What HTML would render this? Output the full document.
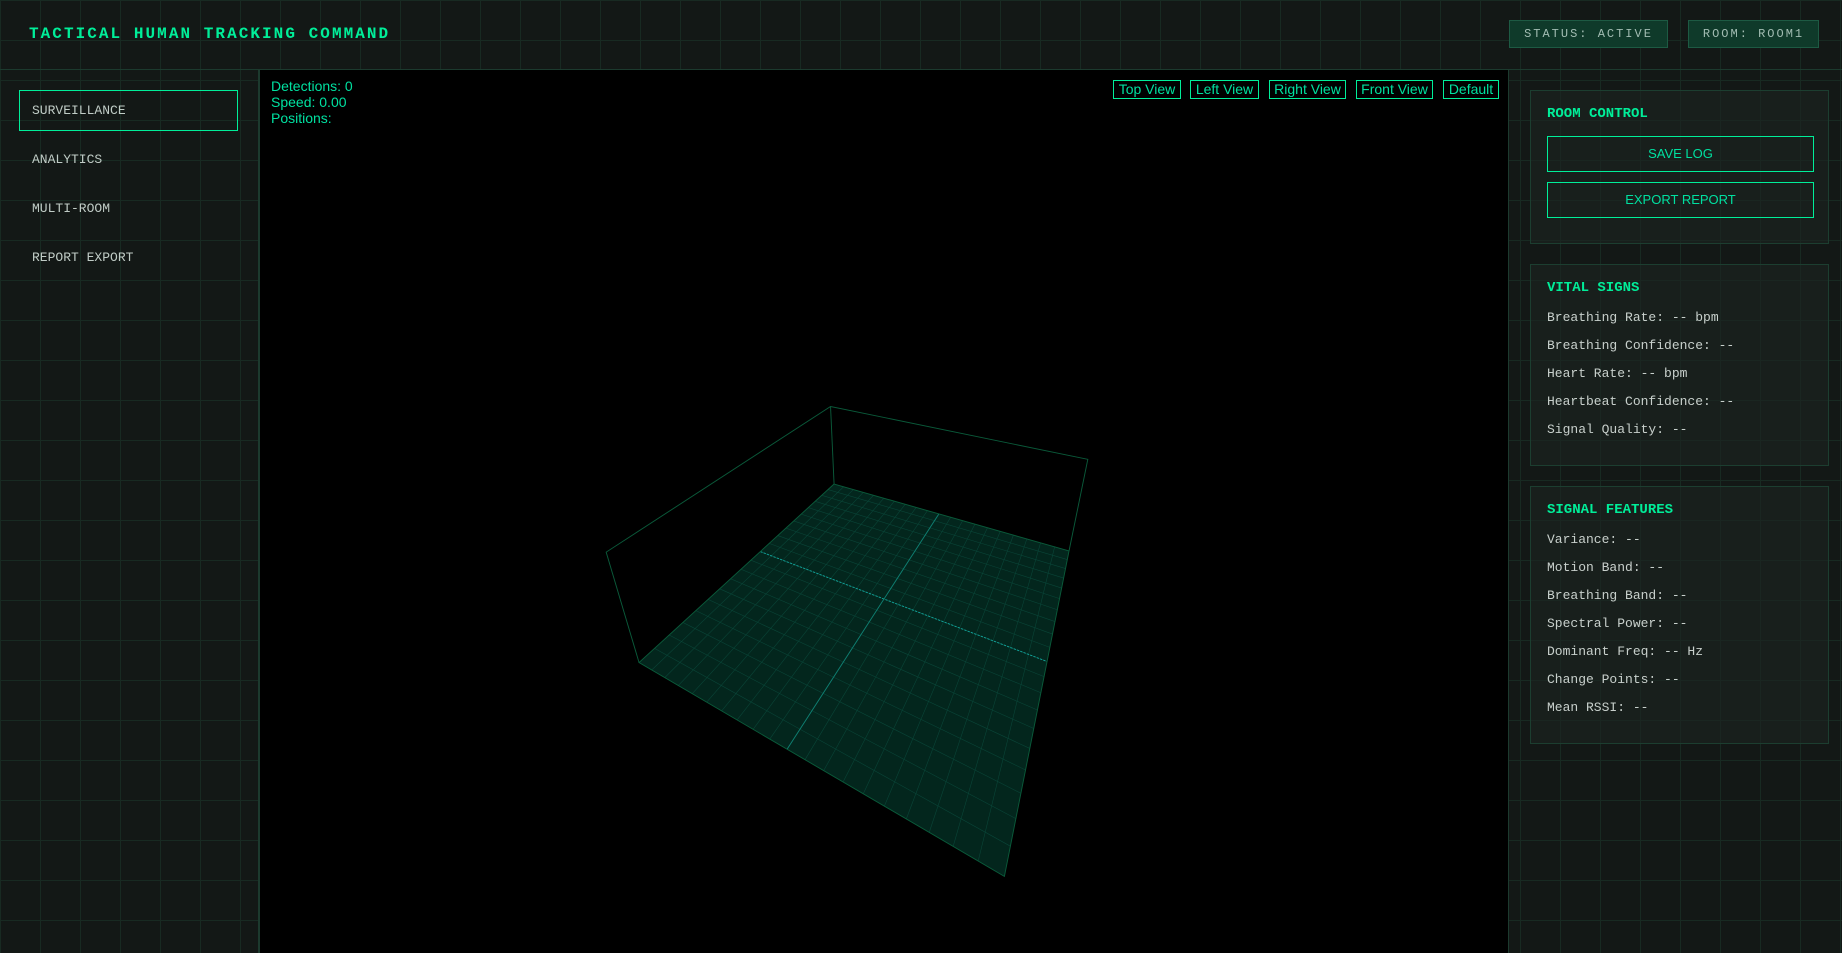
<!DOCTYPE html>
<html><head><meta charset="utf-8"><style>
*{box-sizing:border-box;margin:0;padding:0}
html,body{width:1842px;height:953px;overflow:hidden}
body{background-color:#131816;background-image:linear-gradient(#182a22 1px,transparent 1px),linear-gradient(90deg,#182a22 1px,transparent 1px);background-size:40px 40px;background-position:0 0;font-family:"Liberation Mono",monospace;position:relative}
.hdr{position:absolute;left:0;top:0;width:1842px;height:70px;border-bottom:1px solid #1c3a2e}
.title{position:absolute;left:29px;top:25px;font-size:16px;font-weight:bold;letter-spacing:2.05px;color:#00ee99;white-space:nowrap}
.badge{position:absolute;top:20px;height:28px;background:#0f3a2a;border:1px solid #1d5a43;color:#a3bdb3;font-size:12px;letter-spacing:2px;line-height:26px;text-align:center}
.side{position:absolute;left:0;top:70px;width:259px;height:883px;border-right:1px solid #1c3a2e}
.nav{position:absolute;left:19px;width:219px;height:41px;color:#c0ccc6;font-size:13px;line-height:41px;padding-left:13px}
.nav.act{border:1px solid #00ee99;line-height:39px;padding-left:12px}
.canvas{position:absolute;left:259px;top:70px;width:1250px;height:883px;background:#000;border-left:1px solid #1c3a2e;border-right:1px solid #1c3a2e}
.info{position:absolute;left:271px;top:78px;font-family:"Liberation Sans",sans-serif;font-size:14px;line-height:16px;color:#00e0a0}
.vb{position:absolute;top:80px;height:19px;border:1px solid #00ee99;color:#00e0a0;font-family:"Liberation Sans",sans-serif;font-size:14px;line-height:17px;text-align:center}
.panel{position:absolute;left:1530px;width:299px;background:rgba(28,36,33,0.6);border:1px solid #1c3e30}
.ph{position:absolute;left:16px;font-size:14px;font-weight:bold;color:#00ee99}
.btn{position:absolute;left:16px;width:267px;height:36px;border:1px solid #00ee99;color:#00e0a0;font-family:"Liberation Sans",sans-serif;font-size:13px;line-height:34px;text-align:center}
.row{position:absolute;left:16px;font-size:13px;color:#c8d0cc;white-space:pre}
</style></head><body>
<div class="hdr"></div>
<div class="title">TACTICAL HUMAN TRACKING COMMAND</div>
<div class="badge" style="left:1509px;width:159px">STATUS: ACTIVE</div>
<div class="badge" style="left:1688px;width:131px">ROOM: ROOM1</div>
<div class="side"></div>
<div class="nav act" style="top:90px">SURVEILLANCE</div>
<div class="nav" style="top:139px">ANALYTICS</div>
<div class="nav" style="top:188px">MULTI-ROOM</div>
<div class="nav" style="top:237px">REPORT EXPORT</div>
<div class="canvas"></div>
<svg id="sc" style="position:absolute;left:0;top:0" width="1842" height="953" viewBox="0 0 1568 811.2">
<polygon points="710,412 910,469 855,746 544,564" fill="#03261d"/>
<g id="gr" stroke="#0a4538" stroke-width="0.5" fill="none"></g>
<line id="c1" stroke="#12a39a" stroke-width="0.8" stroke-dasharray="2,1"/>
<line id="c2" stroke="#0f7f72" stroke-width="0.8"/>
<g stroke="#0a5a3a" stroke-width="0.8" fill="none">
<polyline points="544,564 516,470 707,346 926,391 910,469"/>
<line x1="707" y1="346" x2="710" y2="412"/>
<polyline points="710,412 910,469 855,746 544,564 710,412"/>
</g>
</svg>
<script>
(function(){
var x0=710,y0=412,x1=910,y1=469,x2=855,y2=746,x3=544,y3=564;
var dx1=x1-x2,dx2=x3-x2,dx3=x0-x1+x2-x3,dy1=y1-y2,dy2=y3-y2,dy3=y0-y1+y2-y3;
var den=dx1*dy2-dx2*dy1;
var g=(dx3*dy2-dx2*dy3)/den,h=(dx1*dy3-dx3*dy1)/den;
var a=x1-x0+g*x1,b=x3-x0+h*x3,c=x0,d=y1-y0+g*y1,e=y3-y0+h*y3,f=y0;
function P(u,v){var w=g*u+h*v+1;return[(a*u+b*v+c)/w,(d*u+e*v+f)/w];}
var gr=document.getElementById('gr'),ns='http://www.w3.org/2000/svg';
function L(el,p,q){el.setAttribute('x1',p[0]);el.setAttribute('y1',p[1]);el.setAttribute('x2',q[0]);el.setAttribute('y2',q[1]);}
var N=20;
for(var i=1;i<N;i++){
var t=i/N;
var l1=document.createElementNS(ns,'line');L(l1,P(t,0),P(t,1));gr.appendChild(l1);
var l2=document.createElementNS(ns,'line');L(l2,P(0,t),P(1,t));gr.appendChild(l2);
}
L(document.getElementById('c1'),P(0,.5),P(1,.5));
L(document.getElementById('c2'),P(.5,0),P(.5,1));
})();
</script>
<div class="info">Detections: 0<br>Speed: 0.00<br>Positions:</div>
<div class="vb" style="left:1113px;width:68px">Top View</div>
<div class="vb" style="left:1190px;width:69px">Left View</div>
<div class="vb" style="left:1269px;width:77px">Right View</div>
<div class="vb" style="left:1356px;width:77px">Front View</div>
<div class="vb" style="left:1443px;width:56px">Default</div>
<div class="panel" style="top:90px;height:154px">
<div class="ph" style="top:15px">ROOM CONTROL</div>
<div class="btn" style="top:45px">SAVE LOG</div>
<div class="btn" style="top:91px">EXPORT REPORT</div>
</div>
<div class="panel" style="top:264px;height:202px">
<div class="ph" style="top:15px">VITAL SIGNS</div>
<div class="row" style="top:45px">Breathing Rate: -- bpm</div>
<div class="row" style="top:73px">Breathing Confidence: --</div>
<div class="row" style="top:101px">Heart Rate: -- bpm</div>
<div class="row" style="top:129px">Heartbeat Confidence: --</div>
<div class="row" style="top:157px">Signal Quality: --</div>
</div>
<div class="panel" style="top:486px;height:258px">
<div class="ph" style="top:15px">SIGNAL FEATURES</div>
<div class="row" style="top:45px">Variance: --</div>
<div class="row" style="top:73px">Motion Band: --</div>
<div class="row" style="top:101px">Breathing Band: --</div>
<div class="row" style="top:129px">Spectral Power: --</div>
<div class="row" style="top:157px">Dominant Freq: -- Hz</div>
<div class="row" style="top:185px">Change Points: --</div>
<div class="row" style="top:213px">Mean RSSI: --</div>
</div>
</body></html>
